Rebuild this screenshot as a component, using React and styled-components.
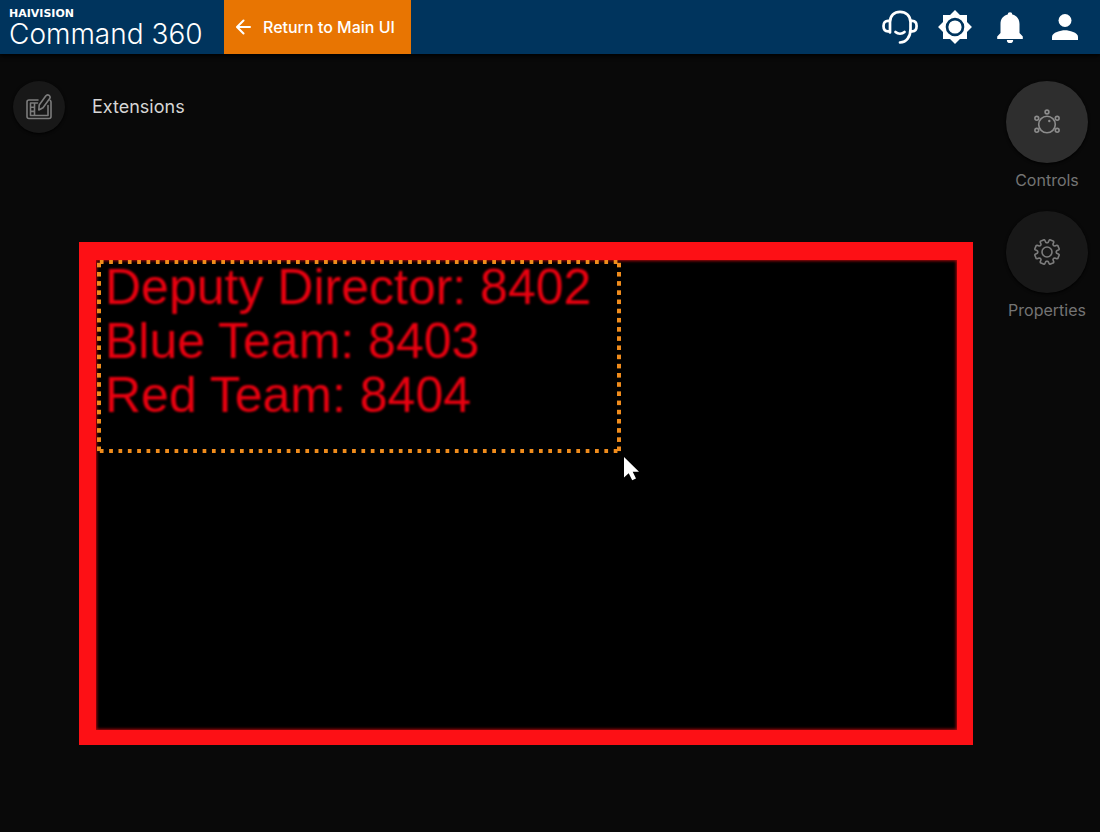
import React from "react";
import styled, { createGlobalStyle } from "styled-components";

const GlobalStyle = createGlobalStyle`
  *, *::before, *::after { box-sizing: border-box; }
  body {
    margin: 0;
    background: #090909;
    color: #d6d6d6;
    font-family: Inter, "Noto Sans", sans-serif;
  }
  button { font: inherit; color: inherit; border: 0; padding: 0; cursor: pointer; }
`;

const Page = styled.div`
  min-height: 100vh;
  display: flex;
  flex-direction: column;
`;

const Header = styled.header`
  display: flex;
  align-items: stretch;
  height: 54px;
  background: #00345d;
  color: #fff;
  box-shadow: 0 2px 4px #000;
`;

const Brand = styled.div`
  width: 224px;
  padding: 8px 0 0 9px;
  white-space: nowrap;
`;

const BrandCompany = styled.div`
  font-family: "DejaVu Sans", sans-serif;
  font-size: 11px;
  font-weight: 700;
  line-height: 12px;
`;

const BrandProduct = styled.div`
  font-size: 28px;
  font-weight: 300;
  line-height: 28px;
`;

const ReturnButton = styled.button`
  display: flex;
  align-items: center;
  gap: 12px;
  padding: 0 16px 0 12px;
  background: #e87502;
  font-size: 16px;
  font-weight: 500;
  white-space: nowrap;
`;

const HeaderActions = styled.nav`
  display: flex;
  align-items: center;
  gap: 19px;
  margin-left: auto;
  padding-right: 17px;
`;

const HeaderAction = styled.button`
  display: flex;
  width: 36px;
  height: 36px;
  align-items: center;
  justify-content: center;
  background: none;
`;

const Workspace = styled.div`
  display: flex;
  flex: 1;
  align-items: flex-start;
`;

const Editor = styled.main`
  flex: 1;
  min-width: 0;
  padding: 27px 21px 40px 13px;
`;

const TitleBar = styled.div`
  display: flex;
  align-items: center;
  gap: 27px;
`;

const Title = styled.h1`
  margin: 0;
  font-size: 18px;
  font-weight: 400;
  line-height: 24px;
`;

const RoundButton = styled.button`
  display: flex;
  align-items: center;
  justify-content: center;
  width: ${(p) => p.$size}px;
  height: ${(p) => p.$size}px;
  border-radius: 50%;
  background: ${(p) => (p.$active ? "#2e2e2e" : "#181818")};
  color: ${(p) => (p.$active ? "#8c8c8c" : "#7c7c7c")};
  box-shadow: 0 1px 3px #000;
`;

const Stage = styled.section`
  position: relative;
  aspect-ratio: 16 / 9;
  margin: 109px 0 0 66px;
  border: solid #fd1015;
  border-width: 18px 16px 15px 17px;
  background: #000;
  box-shadow: inset 0 0 3px 1px #a8080c;
`;

const dots = "#f08c1c";
const Selection = styled.div`
  position: relative;
  width: 524px;
  max-width: 100%;
  height: 193px;
  margin-left: 1px;
  padding: 0 8px;
  background:
    linear-gradient(90deg, transparent 3px, ${dots} 3px 7px, transparent 7px) 0 0 / calc(100% / 56) 4px repeat-x,
    linear-gradient(90deg, transparent 3px, ${dots} 3px 7px, transparent 7px) 0 100% / calc(100% / 56) 4px repeat-x,
    linear-gradient(transparent 3px, ${dots} 3px 7px, transparent 7px) 0 0 / 4px calc(100% / 21) repeat-y,
    linear-gradient(transparent 3px, ${dots} 3px 7px, transparent 7px) 100% 0 / 4px calc(100% / 21) repeat-y;
`;

const Directory = styled.p`
  margin: 0;
  color: #e8000f;
  font-family: "Liberation Sans", Arial, sans-serif;
  font-size: 50px;
  line-height: 54px;
  white-space: nowrap;
  filter: blur(1px);
`;

const Pointer = styled.svg`
  position: absolute;
  left: 100%;
  top: 100%;
  margin: 3px 0 0 2px;
`;

const Tools = styled.aside`
  display: flex;
  flex-direction: column;
  gap: 20px;
  width: 106px;
  padding-top: 27px;
`;

const Tool = styled.div`
  display: flex;
  flex-direction: column;
  align-items: center;
  gap: 6px;
`;

const ToolLabel = styled.label`
  color: #747474;
  font-size: 16px;
  line-height: 22px;
`;

function ArrowIcon() {
  return (
    <svg width="15" height="16" viewBox="0 0 15 16" fill="none" stroke="currentColor" strokeWidth="2" strokeLinecap="round" strokeLinejoin="round" aria-hidden="true">
      <path d="M14 8H1.5M7.5 1.5 1 8l6.500 6.500" />
    </svg>
  );
}

function HeadsetIcon() {
  return (
    <svg width="36" height="36" viewBox="0 0 36 36" fill="none" stroke="currentColor" strokeWidth="2.700" strokeLinecap="round" strokeLinejoin="round" aria-hidden="true">
      <path d="M8 23.500V13C8 6.500 12.300 2.800 18 2.800s10.500 3.700 10.500 10.200V20c0 8-4 13.300-10.500 13.500" />
      <path d="M7.700 11.800H6C3.200 11.800 1.500 13.500 1.500 17s1.700 5.300 4.500 5.300h1.700M28.800 11.800h1.500c2.700 0 4.300 1.700 4.300 5.200s-1.600 5.300-4.300 5.300h-1.500" />
      <path d="M13.500 23c2.500 2.300 6.500 2.300 9 0" />
    </svg>
  );
}

function SettingsIcon() {
  return (
    <svg width="36" height="36" viewBox="0 0 24 24" fill="currentColor" aria-hidden="true">
      <path fillRule="evenodd" d="M20 8.690V4h-4.690L12 .69 8.690 4H4v4.690L.69 12 4 15.310V20h4.690L12 23.310 15.310 20H20v-4.690L23.310 12 20 8.690zM12 18.200a6.200 6.200 0 1 1 0-12.400 6.200 6.200 0 0 1 0 12.400z" />
      <circle cx="12" cy="12" r="4.400" />
    </svg>
  );
}

function BellIcon() {
  return (
    <svg width="26" height="32" viewBox="0 0 26 32" fill="currentColor" aria-hidden="true">
      <path d="M10.700 3.600a2.300 2.300 0 0 1 4.600 0C19.800 4.600 22.500 8.300 22.500 13v9l3.300 3.400V28H.2v-2.600L3.500 22v-9c0-4.700 2.700-8.400 7.200-9.400zM9.800 29h6.400a3.200 3.200 0 0 1-6.400 0z" />
    </svg>
  );
}

function UserIcon() {
  return (
    <svg width="26" height="26" viewBox="0 0 26 26" fill="currentColor" aria-hidden="true">
      <circle cx="13" cy="6.500" r="6.500" />
      <path d="M0 26v-3.200c0-4.400 8.700-6.600 13-6.600s13 2.200 13 6.600V26z" />
    </svg>
  );
}

function EditIcon() {
  return (
    <svg width="26" height="26" viewBox="0 0 26 26" fill="none" stroke="currentColor" strokeWidth="1.600" strokeLinejoin="round" strokeLinecap="round" aria-hidden="true">
      <path d="M12 6H3a2 2 0 0 0-2 2v14.500a2 2 0 0 0 2 2h20a2 2 0 0 0 2-2V8a2 2 0 0 0-.8-1.600" />
      <path d="M11.500 9H4.500v12.500h17.500v-10M8.500 9v12.500M4.500 13.200h4M4.500 17.400h4" />
      <path d="m13.200 11 6.500-9c.9-1.200 2.200-1.400 3.400-.6 1.100.9 1.300 2.200.4 3.400l-6.500 9-4.200 2.200z" />
    </svg>
  );
}

function KnobIcon() {
  return (
    <svg width="26" height="26" viewBox="0 0 26 26" fill="none" stroke="currentColor" strokeWidth="1.600" aria-hidden="true">
      <circle cx="13" cy="15.500" r="8.300" />
      <circle cx="13" cy="3" r="1.900" />
      <circle cx="2.800" cy="9.300" r="1.900" />
      <circle cx="23.200" cy="9.300" r="1.900" />
      <circle cx="2.800" cy="21.300" r="1.900" />
      <circle cx="23.200" cy="21.300" r="1.900" />
      <circle cx="15.300" cy="12" r="1.200" fill="currentColor" stroke="none" />
    </svg>
  );
}

const gearPoints = Array.from({ length: 8 }, (_, i) => i * 45 + 22.5)
  .flatMap((a) => [[a - 19, 9.3], [a - 15, 9.8], [a - 12, 12], [a - 9, 12.6], [a + 9, 12.6], [a + 12, 12], [a + 15, 9.8], [a + 19, 9.3]])
  .map(([a, r]) => {
    const t = (a * Math.PI) / 180;
    return `${(13 + r * Math.sin(t)).toFixed(2)},${(13 - r * Math.cos(t)).toFixed(2)}`;
  })
  .join(" ");

function GearIcon() {
  return (
    <svg width="26" height="26" viewBox="0 0 26 26" fill="none" stroke="currentColor" strokeWidth="1.600" strokeLinejoin="round" aria-hidden="true">
      <polygon points={gearPoints} />
      <circle cx="13" cy="13" r="5" />
    </svg>
  );
}

const headerActions = [
  ["Support", HeadsetIcon],
  ["Settings", SettingsIcon],
  ["Notifications", BellIcon],
  ["Account", UserIcon],
];

const tools = [
  { id: "controls", label: "Controls", Icon: KnobIcon, active: true },
  { id: "properties", label: "Properties", Icon: GearIcon, active: false },
];

export default function App() {
  return (
    <Page>
      <GlobalStyle />
      <Header>
        <Brand>
          <BrandCompany>HAIVISION</BrandCompany>
          <BrandProduct>Command 360</BrandProduct>
        </Brand>
        <ReturnButton type="button">
          <ArrowIcon />
          Return to Main UI
        </ReturnButton>
        <HeaderActions>
          {headerActions.map(([name, Icon]) => (
            <HeaderAction key={name} type="button" aria-label={name}>
              <Icon />
            </HeaderAction>
          ))}
        </HeaderActions>
      </Header>
      <Workspace>
        <Editor>
          <TitleBar>
            <RoundButton type="button" $size={52} aria-label="Edit layout">
              <EditIcon />
            </RoundButton>
            <Title>Extensions</Title>
          </TitleBar>
          <Stage>
            <Selection>
              <Directory>
                Deputy Director: 8402
                <br />
                Blue Team: 8403
                <br />
                Red Team: 8404
              </Directory>
              <Pointer width="18" height="26" viewBox="0 0 18 26" fill="#fff" aria-hidden="true">
                <path d="M1 1v20.500l4.700-4.300 3.500 7 3.800-1.700-3.300-6.800H16z" />
              </Pointer>
            </Selection>
          </Stage>
        </Editor>
        <Tools>
          {tools.map(({ id, label, Icon, active }) => (
            <Tool key={id}>
              <RoundButton id={id} type="button" $size={82} $active={active}>
                <Icon />
              </RoundButton>
              <ToolLabel htmlFor={id}>{label}</ToolLabel>
            </Tool>
          ))}
        </Tools>
      </Workspace>
    </Page>
  );
}
